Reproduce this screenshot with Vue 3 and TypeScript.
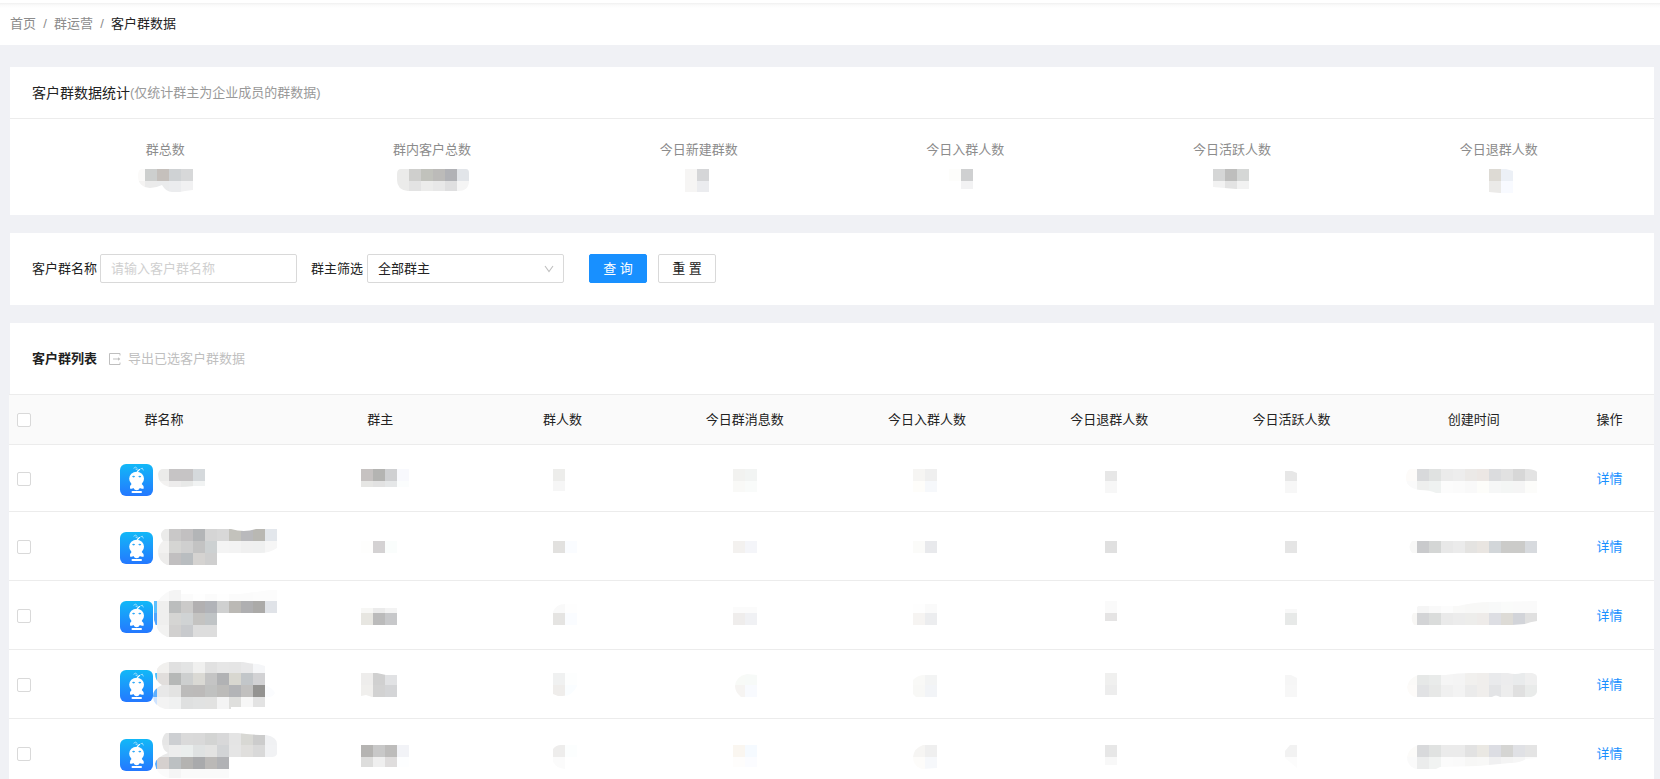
<script setup lang="ts">
import { ref } from 'vue'

interface Mosaic {
  x: number
  ys: number[]
  rows: string[]
  clip?: string
}
interface Tile {
  x: number
  y: number
  h: number
  fill: string
}

const TILE = 12

function tiles(m: Mosaic): Tile[] {
  const out: Tile[] = []
  m.rows.forEach((row, r) => {
    row.split(' ').forEach((c, i) => {
      if (c !== '-') out.push({ x: m.x + i * TILE, y: m.ys[r], h: m.ys[r + 1] - m.ys[r], fill: '#' + c })
    })
  })
  return out
}

const stats: { label: string; left: number; value: Mosaic }[] = [
  { label: '群总数', left: 125, value: { x: 133, ys: [169, 181, 193], rows: ['fbfaf9 cdcfce c5c0bc cfd2d4 d7d8d9', 'f4f3f2 ebebeb eaebec ebecee f1f1f2'], clip: 'M142 169H193V190Q184 191 180 192H172Q166 192 162 185Q156 188 150 188Q138 187 138 176Q138 169 142 169Z' } },
  { label: '群内客户总数', left: 392, value: { x: 397, ys: [169, 181, 191], rows: ['ebebea cfcfcd c1c2bc bcbbb9 b1b2b6 e2e5e9', 'ebebea e3e3e3 ececeb e8e8e8 dfdfe0 f5f5f5'], clip: 'M401 169H466Q469 169 469 173V181Q469 191 458 191H408Q397 190 397 180V174Q397 169 401 169Z' } },
  { label: '今日新建群数', left: 659, value: { x: 685, ys: [169, 181, 192], rows: ['f6f5f4 d5d6d8', 'f6f5f4 ebecef'] } },
  { label: '今日入群人数', left: 925, value: { x: 949, ys: [169, 181, 189], rows: ['fdfdfb cfd0d1', '- f2f2f3'] } },
  { label: '今日活跃人数', left: 1192, value: { x: 1213, ys: [169, 181, 189], rows: ['d5d6d6 bebebd d5d7d6', 'f2f2f2 e3e3e3 f2f2f2'], clip: 'M1213 169H1249V189H1236L1213 187Z' } },
  { label: '今日退群人数', left: 1459, value: { x: 1489, ys: [169, 181, 193], rows: ['dddad4 ecf0f6', 'ebeae8 f8faff'], clip: 'M1489 169H1506L1513 171V193H1500L1489 192Z' } },
]

const columns = ['群主', '群人数', '今日群消息数', '今日入群人数', '今日退群人数', '今日活跃人数', '创建时间']
const cellLefts = [344, 526, 709, 891, 1073, 1256, 1402]
const cellWidths = [72, 72, 72, 72, 72, 72, 144]

interface GroupRow {
  top: number
  name: Mosaic
  cells: Mosaic[]
}

const groups: GroupRow[] = [
  {
    top: 448,
    name: { x: 157, ys: [469, 481, 487], rows: ['ebebea c6c4c5 c6c4c5 d5d9dc', 'f3f2f1 edecec e8e9e8 f1f3f3'], clip: 'M163 469H205V486H194Q186 487 180 487H169Q158 484 158 474Q159 469 163 469Z' },
    cells: [
      { x: 361, ys: [469, 481, 487], rows: ['c6c2c1 b4b4b2 cfd0d2 f8f9fd', 'e6e6e4 e2e2e2 e5e7e8 fbfdfd'] },
      { x: 553, ys: [469, 481, 491], rows: ['ededeb', 'f6f6f6'] },
      { x: 733, ys: [469, 481, 492], rows: ['f2f2f0 f2f4f3', 'f9f9f7 f9fbfa'] },
      { x: 913, ys: [469, 481, 492], rows: ['f6f5f3 efefef', 'fefdfa f6f8fb'] },
      { x: 1105, ys: [471, 481, 493], rows: ['e7e7e7', 'f7f7f7'] },
      { x: 1285, ys: [471, 481, 493], rows: ['e7e7e7', 'f7f7f7'], clip: 'M1285 471H1292L1297 473V493H1285Z' },
      { x: 1405, ys: [469, 481, 493], rows: ['fdfbf9 d8d9db e0e2e1 ebebeb ededed ebe9e7 ece7e4 dbdcde e1e1e1 d7d7d7 e3e3e3', 'fafafa eeefee eff2f1 fcfcfc fbfbfb f9f9f9 fdfdfa f6f7f7 f4f6f5 f5f5f5 fcfcfa'], clip: 'M1410 469H1528Q1536 470 1537 472V493H1436Q1430 490 1420 490Q1406 488 1406 478Q1406 471 1410 469Z' },
    ],
  },
  {
    top: 516,
    name: { x: 157, ys: [529, 541, 553, 565], rows: ['ebebea c9c8c8 c2c0c1 b3b5b7 d5d5d5 d8d8d8 c3c2bc b9b9bc b9b8b3 e3e7ec', 'f2f1f0 d5d5d3 cfcfcf c3c3c3 cdd1d2 f4f4f4 f3f3f3 f0f0f0 eff0f0 f6f6f6', 'edeceb c1bfc0 b9bdc0 d5d3d1 cfcfcf'], clip: 'M165 529H231Q244 533 256 529H277V548Q270 553 260 553H217V565H167Q158 561 158 551Q159 544 163 541Q158 533 165 529Z' },
    cells: [
      { x: 361, ys: [541, 553], rows: ['fefefd d4d2d3 fafdfc'] },
      { x: 553, ys: [541, 553], rows: ['e2e1df fafcff'] },
      { x: 733, ys: [541, 553], rows: ['f3f1ef f4f5f9'] },
      { x: 913, ys: [541, 553], rows: ['fbfbf9 e8e9ec'] },
      { x: 1105, ys: [541, 553], rows: ['e0e0e0'] },
      { x: 1285, ys: [541, 553], rows: ['e5e5e5'] },
      { x: 1405, ys: [541, 553], rows: ['f8f8f7 c9cacc d4d6d5 e8e8e8 ebebeb e4e3e1 e9e5e1 d2d6d9 cbcbc9 cbcbc9 d7dade'], clip: 'M1412 541H1537V553H1412Q1407 547 1412 541Z' },
    ],
  },
  {
    top: 585,
    name: { x: 145, ys: [590, 601, 613, 625, 637], rows: ['- f9f9f9 f4f4f4 fbfbfb fefefe fbfbfb fefefe fbfbfb fbfbfb fcfcfc fcfcfc', '5cc0ff efefee bbbdbd cbcac9 b2b0b1 b1b3b8 cfd0d0 bbb9b5 afafb1 abaaa8 e0e3e8', '4fa5ff efefee d5d5d3 d0d3d4 c4c3c1 c0c4c6', '- f2f2f1 d1d0cf c8cacd dddddd dddddd'], clip: 'M154 601H158Q165 591 174 590H181V594H240L270 590H277V613H217V637H167Q157 633 154 620Z' },
    cells: [
      { x: 361, ys: [608, 613, 625], rows: ['f7f7f5 ebebeb f3f3f3', 'e7e6e1 bbbbbb c7c8ca'] },
      { x: 553, ys: [604, 613, 625], rows: ['f9f9f9 fefefe', 'e5e4e2 fafcff'], clip: 'M553 612Q556 604 565 604H577V625H553Z' },
      { x: 733, ys: [607, 613, 625], rows: ['fbfbfb fbfbfb', 'efedec f0f1f4'] },
      { x: 913, ys: [604, 613, 625], rows: ['fefefe fafafa', 'f6f4f2 ecedef'] },
      { x: 1105, ys: [601, 613, 621], rows: ['fafafa', 'e5e4e4'] },
      { x: 1285, ys: [609, 613, 625], rows: ['f8f8f8', 'e7e9e8'] },
      { x: 1405, ys: [601, 613, 625], rows: ['- f5f5f5 f9f9f9 fcfcfc f9f9f8 f8f8f7 f8f8f7 f8f9f9 fafbfa fafafa fafafa', 'f8f7f5 d3d4d6 dadcdb eaeaea ececec ededeb eeebe9 dddee3 dddbd6 d2d4d9 e0e0e0'], clip: 'M1413 613L1418 606H1458Q1475 602 1490 602L1537 601V621Q1530 622 1525 624L1512 625H1414Q1410 619 1413 613Z' },
    ],
  },
  {
    top: 654,
    name: { x: 145, ys: [662, 673, 685, 697, 709], rows: ['- f1f0ee e0e0e0 e3e4e4 f0f0ef e1e1e1 e6e6e6 e5e5e5 e8e8e9 f5f6f8', '4fc0ff e1dedc b6b8b7 cdcfcf dad9d4 c4c4c4 b1b2b4 d8d7d0 c2c6c9 d2d2d4', '5caeff e8e8e8 e3e3e2 bcbbba bcbab9 c0c1c0 bcbbb9 b3b4b7 c1c0bf 949391 fbfcfe', 'cfe4ff f3f3f3 f0f1f1 dfe0e0 e1e2e2 e2e2e1 f4f4f4 dfdfdd f7f7f7 e3e3e3'], clip: 'M168 662H243Q250 664 258 664L265 666V685Q273 688 275 693Q274 697 265 698V707H231V709H165Q153 706 153 696Q153 689 162 685Q155 681 155 674Q157 664 168 662Z' },
    cells: [
      { x: 361, ys: [673, 685, 697], rows: ['eeedec d0d0d0 e1e2e4', 'f0efed d2d2d2 d4d5d7'], clip: 'M361 673H377L386 675H397V697H372L366 695L361 696Z' },
      { x: 553, ys: [673, 685, 696], rows: ['f0f1f1 fdfefe', 'efedeb fafdff'], clip: 'M553 673H577V686Q573 696 562 696H558L553 694Z' },
      { x: 733, ys: [674, 685, 697], rows: ['f8faf7 f7faf8', 'f6f4f2 f8fafe'], clip: 'M747 674L757 675V697H741Q735 692 735 686Q736 676 747 674Z' },
      { x: 913, ys: [675, 685, 697], rows: ['f9f9f7 f3f4f4', 'f8f8f6 f2f4f7'], clip: 'M913 680Q918 675 924 675H937V697H916L913 694Z' },
      { x: 1105, ys: [673, 685, 695], rows: ['f0f0ef', 'ededed'] },
      { x: 1285, ys: [675, 685, 697], rows: ['f6f6f6', 'f7f7f7'], clip: 'M1285 675H1291L1297 678V697H1285Z' },
      { x: 1405, ys: [673, 685, 697], rows: ['fbfaf8 e6e8e7 e9ebea f5f5f5 f4f4f4 f1f0ee f0eeec e9eaec ececed e9ebec efefef', 'fdfbf9 e1e2e4 e7e8e7 f0f0f0 f3f3f3 ebebeb f0eeec e3e4e6 ededed e0e0e0 e9ebea'], clip: 'M1418 675H1445Q1458 673 1470 673H1508Q1515 675 1522 673H1532Q1537 674 1537 677V692Q1536 696 1531 697H1500Q1496 694 1492 697H1415Q1408 695 1407 687Q1409 678 1418 675Z' },
    ],
  },
  {
    top: 723,
    name: { x: 145, ys: [733, 745, 757, 769, 778], rows: ['- e6e6e6 cdcfd2 dadada d9d9d9 d3d4d3 d8d8d9 e4e4e4 d8d8d4 cccccc f0f1f3', '- e9e9e9 ededed eaeeed dfe2e2 e3e3e2 d2d4d6 e5e5e5 e0dfdd d9d9d9 f1f2f4', '5cadff d5d0ce bcc0c2 b4b3b1 a9aaac bbb9b7 b1b2b5', '- fbfbfb f5f5f5 fafafa fafafa fafafa fafafa'], clip: 'M166 733H238Q250 735 266 735Q277 737 277 744V754Q276 757 272 757H229V778H168Q156 774 155 764Q156 757 168 753Q162 750 162 741Q163 735 166 733Z' },
    cells: [
      { x: 361, ys: [745, 757, 767], rows: ['b5b4b2 c8c8c8 bdbcbb f2f3f7', 'dddddc efefef dfdddd fdfeff'] },
      { x: 553, ys: [745, 757, 769], rows: ['eeedec fcfefe', 'fbfbfb'], clip: 'M553 749Q556 745 561 745H577V757H565V769Q555 768 553 761Z' },
      { x: 733, ys: [745, 757, 767], rows: ['faf6f0 f5faff', 'fefdfc fbfcff'] },
      { x: 913, ys: [745, 757, 769], rows: ['f6f5f3 efefef', 'fdfcfa f6f8fb'], clip: 'M923 745H937V768L922 769Q913 766 913 757Q914 748 923 745Z' },
      { x: 1105, ys: [745, 757, 765], rows: ['e7e7e7', 'f8f8f8'] },
      { x: 1285, ys: [745, 757, 768], rows: ['f2f2f2', 'fcfcfc'], clip: 'M1290 745H1297V768L1285 758V751Z' },
      { x: 1405, ys: [745, 757, 769], rows: ['fcfbf9 d8d9db e0e2e1 ebebeb ebebeb e2e2e2 eae8e3 dcdde3 d5d5d3 e0e1e5 e4e4e4', 'fafafa ebecec f1f3f2 fbfbfb fafafa f7f7f6 f8f8f7 f0f0f1 f4f4f4 f6f6f6 fbfbfb'], clip: 'M1418 745H1537V758L1526 759Q1520 763 1510 763L1478 766L1440 767L1436 769H1416Q1407 766 1407 757Q1409 748 1418 745Z' },
    ],
  },
]

const keyword = ref('')
const owner = ref('all')
const selected = ref<number[]>([])

function toggleAll(e: Event) {
  selected.value = (e.target as HTMLInputElement).checked ? groups.map((_, i) => i) : []
}
function reset() {
  keyword.value = ''
  owner.value = 'all'
}
</script>

<template>
  <div class="page">
    <nav class="crumbs" aria-label="面包屑">
      <a href="#">首页</a><span class="sep">/</span><a href="#">群运营</a><span class="sep">/</span><span class="here">客户群数据</span>
    </nav>

    <main class="content">
      <section class="card">
        <header class="stats-head">
          <h2>客户群数据统计</h2><span>(仅统计群主为企业成员的群数据)</span>
        </header>
        <div class="stats">
          <div v-for="(s, i) in stats" :key="s.label" class="stat">
            <span>{{ s.label }}</span>
            <svg width="80" height="24" :viewBox="`${s.left} 169 80 24`" shape-rendering="crispEdges">
              <clipPath v-if="s.value.clip" :id="`stat-${i}`"><path :d="s.value.clip" /></clipPath>
              <g :clip-path="s.value.clip ? `url(#stat-${i})` : undefined">
                <rect v-for="(t, k) in tiles(s.value)" :key="k" :x="t.x" :y="t.y" width="12" :height="t.h" :fill="t.fill" />
              </g>
            </svg>
          </div>
        </div>
      </section>

      <form class="card filters" @submit.prevent>
        <label for="group-name">客户群名称</label>
        <input id="group-name" v-model="keyword" class="field" type="text" placeholder="请输入客户群名称" />
        <label for="owner" class="owner-label">群主筛选</label>
        <div class="select">
          <select id="owner" v-model="owner" class="field">
            <option value="all">全部群主</option>
          </select>
          <svg width="10" height="8" viewBox="0 0 10 8"><path d="M1 1L5 6.5L9 1" fill="none" stroke="#bfbfbf" stroke-width="1.1" /></svg>
        </div>
        <button class="btn primary" type="submit">查 询</button>
        <button class="btn" type="button" @click="reset">重 置</button>
      </form>

      <section class="card list">
        <header class="list-head">
          <h3>客户群列表</h3>
          <button class="export" type="button" disabled>
            <svg width="12" height="12" viewBox="0 0 12 12" fill="none" stroke="currentColor">
              <path d="M11 2.5V.5H.5V11.5H11V9.5M4 6H10.5" />
              <path d="M9 4.2L11.3 6L9 7.8Z" fill="currentColor" stroke="none" />
            </svg>
            导出已选客户群数据
          </button>
        </header>
        <table>
          <colgroup>
            <col class="c-check" /><col class="c-name" />
            <col v-for="c in columns" :key="c" />
            <col class="c-action" />
          </colgroup>
          <thead>
            <tr>
              <th class="check"><input type="checkbox" aria-label="全选" :checked="selected.length === groups.length" @change="toggleAll" /></th>
              <th>群名称</th>
              <th v-for="c in columns" :key="c">{{ c }}</th>
              <th>操作</th>
            </tr>
          </thead>
          <tbody>
            <tr v-for="(g, r) in groups" :key="r">
              <td class="check"><input v-model="selected" type="checkbox" :value="r" :aria-label="`选择第${r + 1}行`" /></td>
              <td class="name">
                <div>
                  <svg width="33" height="32" viewBox="0 0 33 32">
                    <defs>
                      <linearGradient :id="`sky-${r}`" x1="0" y1="0" x2="0" y2="1">
                        <stop offset="0" stop-color="#12b8f7" />
                        <stop offset="1" stop-color="#2478ff" />
                      </linearGradient>
                    </defs>
                    <rect width="33" height="32" rx="6" :fill="`url(#sky-${r})`" />
                    <g fill="none" stroke="#fff" stroke-linecap="round">
                      <path d="M17.2 8.5Q17.6 6.8 19.5 5.6" stroke-width="1.2" />
                      <path d="M13.8 4Q15.5 2 17.2 4.2M20.8 4.6Q22.8 2.8 23.3 6M15.8 5.2L17.4 5.8" stroke-width="1" opacity=".55" />
                    </g>
                    <ellipse cx="16.6" cy="14.8" rx="7.4" ry="7" fill="#fff" />
                    <path d="M12 19.5Q9.5 21.5 10 24.5Q12 25.3 13.4 24Q14.5 26.3 16.6 26.3Q18.8 26.3 19.9 24Q21.5 25.3 23.8 24.5Q24 21.5 21.3 19.5Z" fill="#fff" />
                    <ellipse cx="13.6" cy="12.6" rx="1.4" ry=".8" fill="#2fa8f8" />
                    <ellipse cx="19.8" cy="12.6" rx="1.4" ry=".8" fill="#2fa8f8" />
                    <rect x="11.5" y="27" width="10.5" height="2" rx="1" fill="#fff" />
                  </svg>
                  <svg width="132" height="60" :viewBox="`153 ${g.top + 2} 132 60`" shape-rendering="crispEdges">
                    <clipPath :id="`name-${r}`"><path :d="g.name.clip" /></clipPath>
                    <g :clip-path="`url(#name-${r})`">
                      <rect v-for="(t, k) in tiles(g.name)" :key="k" :x="t.x" :y="t.y" width="12" :height="t.h" :fill="t.fill" />
                    </g>
                  </svg>
                </div>
              </td>
              <td v-for="(m, c) in g.cells" :key="c">
                <svg :width="cellWidths[c]" height="60" :viewBox="`${cellLefts[c]} ${g.top} ${cellWidths[c]} 60`" shape-rendering="crispEdges">
                  <clipPath v-if="m.clip" :id="`cell-${r}-${c}`"><path :d="m.clip" /></clipPath>
                  <g :clip-path="m.clip ? `url(#cell-${r}-${c})` : undefined">
                    <rect v-for="(t, k) in tiles(m)" :key="k" :x="t.x" :y="t.y" width="12" :height="t.h" :fill="t.fill" />
                  </g>
                </svg>
              </td>
              <td class="action"><a href="#">详情</a></td>
            </tr>
          </tbody>
        </table>
      </section>
    </main>
  </div>
</template>

<style>
html {
  scrollbar-width: none;
}
body {
  margin: 0;
  background: #f0f1f5;
}
</style>

<style scoped>
.page {
  min-height: 100vh;
  background: #f0f1f5;
  color: #222;
  font: 13px/20px "Liberation Sans", "Noto Sans CJK SC", sans-serif;
}
.page * {
  box-sizing: border-box;
}
svg {
  display: block;
}
.crumbs {
  display: flex;
  align-items: center;
  height: 45px;
  padding: 3px 10px 0;
  background: linear-gradient(#fff 3px, #f0f0f0 3px, #fafafa 5px, #fff 8px);
  color: #8c8c8c;
}
.crumbs a {
  color: inherit;
  text-decoration: none;
}
.sep {
  width: 18px;
  text-align: center;
}
.here {
  color: #222;
}
.content {
  display: flex;
  flex-direction: column;
  gap: 18px;
  padding: 22px 6px 0 10px;
}
.card {
  background: #fff;
}
.stats-head {
  display: flex;
  align-items: center;
  height: 52px;
  padding: 0 22px;
  border-bottom: 1px solid #ececec;
  color: #999;
}
h2,
h3 {
  margin: 0;
  color: #222;
}
h2 {
  font-size: 14px;
  font-weight: 400;
}
h3 {
  font-size: 13px;
  font-weight: 700;
}
.stats {
  display: grid;
  grid-template-columns: repeat(6, 1fr);
  padding: 21px 22px 22px;
}
.stat {
  display: flex;
  flex-direction: column;
  align-items: center;
  gap: 9px;
  color: #8c8c8c;
}
.filters {
  display: flex;
  align-items: center;
  height: 72px;
  padding: 0 22px 1px;
}
.filters label {
  width: 68px;
}
.filters .owner-label {
  width: 56px;
  margin-left: 14px;
}
.field {
  display: block;
  width: 197px;
  height: 29px;
  padding: 0 10px;
  border: 1px solid #d9d9d9;
  border-radius: 2px;
  outline: none;
  background: #fff;
  color: #222;
  font: inherit;
  appearance: none;
}
.field::placeholder {
  color: #d0d0d0;
}
.select {
  position: relative;
  margin-right: 25px;
}
.select svg {
  position: absolute;
  top: 11px;
  right: 10px;
  pointer-events: none;
}
.btn {
  width: 58px;
  height: 29px;
  margin-right: 11px;
  padding: 0;
  border: 1px solid #d9d9d9;
  border-radius: 2px;
  background: #fff;
  color: #222;
  font: inherit;
}
.btn.primary {
  border-color: #1890ff;
  background: #1890ff;
  color: #fff;
}
.list-head {
  display: flex;
  align-items: center;
  gap: 12px;
  height: 71px;
  padding: 0 22px;
}
.export {
  display: flex;
  align-items: center;
  gap: 7px;
  padding: 0;
  border: 0;
  background: none;
  color: #bfbfbf;
  font: inherit;
}
table {
  width: calc(100% + 1px);
  margin-left: -1px;
  border-spacing: 0;
  table-layout: fixed;
  background: #fff;
}
.c-check {
  width: 30px;
}
.c-name {
  width: 250px;
}
.c-action {
  width: 89px;
}
th {
  height: 51px;
  padding: 0;
  border-top: 1px solid #ececec;
  border-bottom: 1px solid #ececec;
  background: #fafafa;
  font-weight: 400;
}
td {
  height: 69px;
  padding: 0;
  border-bottom: 1px solid #ececec;
  text-align: center;
}
tbody tr:first-child td {
  height: 67px;
}
td svg {
  margin: 0 auto;
}
td a {
  color: #1890ff;
  text-decoration: none;
}
.check {
  padding-left: 8px;
}
td.check,
td.action {
  padding-top: 2px;
}
input[type="checkbox"] {
  display: block;
  width: 14px;
  height: 14px;
  margin: 0;
  border: 1px solid #d9d9d9;
  border-radius: 2px;
  background: #fff;
  appearance: none;
}
input[type="checkbox"]:checked {
  border-color: #1890ff;
  background: #1890ff;
}
.name {
  padding: 4px 0 0 81px;
}
.name div {
  display: flex;
  align-items: center;
}
.name svg {
  flex: none;
  margin: 0;
}
</style>
